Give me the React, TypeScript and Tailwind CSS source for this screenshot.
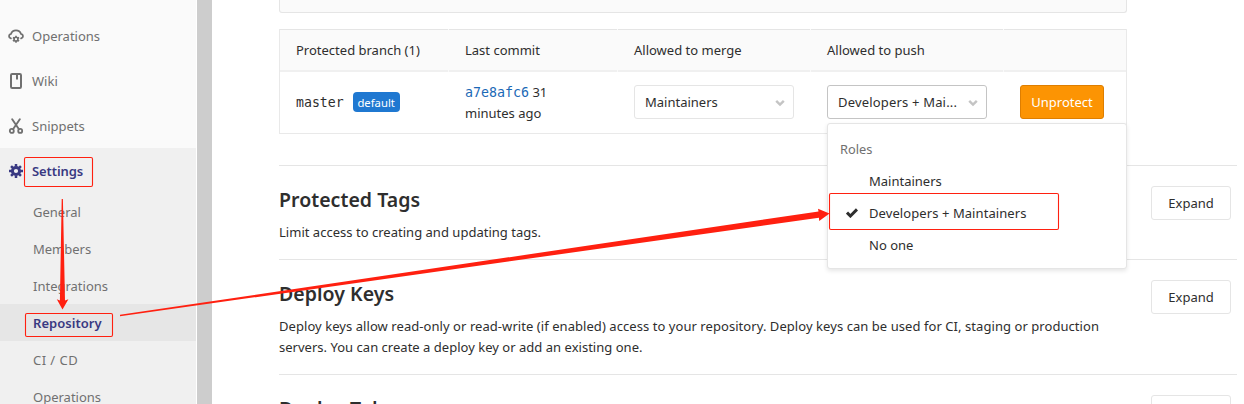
import React from "react";

type IconProps = { className?: string };

function CloudGearIcon({ className }: IconProps) {
  return (
    <svg viewBox="0 0 16 16" fill="none" className={className}>
      <path d="M2.9 10.4C.3 9.6.4 6.3 3.1 5.8A5.1 4.7 0 0 1 12.9 5.8C15.6 6.3 15.7 9.6 13.1 10.4" stroke="currentColor" strokeWidth="1.8" strokeLinecap="round" />
      <circle cx="8" cy="11.2" r="1.9" stroke="currentColor" strokeWidth="1.6" />
      <path d="M8 7.7v1.4M8 13.3v1.4M4.9 9.5l1.3.7M9.8 12.3l1.3.7M11.1 9.5l-1.3.7M6.2 12.3l-1.3.7" stroke="currentColor" strokeWidth="1.6" />
    </svg>
  );
}

function BookIcon({ className }: IconProps) {
  return (
    <svg viewBox="0 0 16 16" fill="none" className={className}>
      <rect x="3" y="1" width="10" height="14" rx="1.2" stroke="currentColor" strokeWidth="2" />
      <path d="M8 1h2v6L9 6 8 7z" fill="currentColor" />
    </svg>
  );
}

function ScissorsIcon({ className }: IconProps) {
  return (
    <svg viewBox="0 0 16 16" fill="none" stroke="currentColor" className={className}>
      <path d="M4.2 1.2 10.8 11M11.8 1.2 5.2 11" strokeWidth="1.9" strokeLinecap="round" />
      <circle cx="3.8" cy="12.9" r="2" strokeWidth="1.8" />
      <circle cx="12.2" cy="12.9" r="2" strokeWidth="1.8" />
    </svg>
  );
}

function GearIcon({ className }: IconProps) {
  return (
    <svg viewBox="0 0 16 16" fill="none" stroke="currentColor" className={className}>
      <circle cx="8" cy="8" r="3.6" strokeWidth="3" />
      <path d="M8 1v2.5M8 12.5V15M1 8h2.5M12.5 8H15M3.05 3.05l1.8 1.8M11.15 11.15l1.8 1.8M12.95 3.05l-1.8 1.8M4.85 11.15l-1.8 1.8" strokeWidth="2.5" />
    </svg>
  );
}

function Chevron() {
  return (
    <svg viewBox="0 0 10 8" fill="none" className="h-2 w-2.5 shrink-0 text-[#c4c4c4]">
      <path d="M1.2 1.8 5 5.6l3.8-3.8" stroke="currentColor" strokeWidth="2.4" />
    </svg>
  );
}

function CheckMark() {
  return (
    <svg viewBox="0 0 12 10" fill="none" className="-mt-0.5 h-2.5 w-3 text-[#2e2e2e]">
      <path d="M1 4.6 4.4 8 11 1.4" stroke="currentColor" strokeWidth="3" />
    </svg>
  );
}

const mainItems = [
  { label: "Operations", Icon: CloudGearIcon },
  { label: "Wiki", Icon: BookIcon },
  { label: "Snippets", Icon: ScissorsIcon },
];

const subItems = ["General", "Members", "Integrations", "Repository", "CI / CD", "Operations"];

function subItemClass(label: string) {
  if (label === "Repository") {
    return "flex h-[37px] items-center bg-[#e6e6e6] pt-[3px] pl-[33px] font-semibold tracking-[0.03px] text-[#393982]";
  }
  if (label === "CI / CD") {
    return "flex h-[37px] items-center pt-[3px] pl-[33px] tracking-[0.45px]";
  }
  return "flex h-[37px] items-center pt-[3px] pl-[33px]";
}

function Sidebar() {
  return (
    <nav className="h-[404px] w-[196px] shrink-0 overflow-hidden bg-[#fafafa] pt-[13px] text-[#707070]">
      {mainItems.map(({ label, Icon }) => (
        <div key={label} className="flex h-[45px] items-center gap-2 pt-px pl-2">
          <Icon className="h-4 w-4" />
          <span className="pt-0.5">{label}</span>
        </div>
      ))}
      <div className="bg-[#f0f0f0]">
        <div className="flex h-[45px] items-center gap-2 pt-px pl-2 font-semibold text-[#393982]">
          <GearIcon className="h-4 w-4" />
          <span className="pt-0.5 tracking-[-0.1px]">Settings</span>
        </div>
        {subItems.map((label) => (
          <div key={label} className={subItemClass(label)}>
            {label}
          </div>
        ))}
      </div>
    </nav>
  );
}

function RoleMenu() {
  return (
    <div className="absolute top-[37px] -left-px z-10 h-[146px] w-[300px] rounded-[3px] border border-[#e5e5e5] bg-white pt-[10px] shadow-[0_2px_4px_rgba(0,0,0,0.1)]">
      <div className="flex h-8 items-center pl-3 text-[12.8px] text-[#707070]">Roles</div>
      <div className="flex h-8 items-center pl-[41px]">Maintainers</div>
      <div className="flex h-8 items-center pl-[18px]">
        <CheckMark />
        <span className="pl-[11px] tracking-[0.08px]">Developers + Maintainers</span>
      </div>
      <div className="flex h-8 items-center pl-[41px]">No one</div>
    </div>
  );
}

const columns = "grid grid-cols-[169px_169px_193px_193px_122px]";

function HeaderCell({ children }: { children?: React.ReactNode }) {
  return (
    <div className="mr-px flex h-[43px] items-center border-t border-b-2 border-t-[#e5e5e5] border-b-[#f0f0f0] pt-0.5 pl-4 last:mr-0">
      {children}
    </div>
  );
}

function BranchTable() {
  return (
    <div className="mt-4 h-[105px] w-[848px] border-r border-b border-l border-[#e9e9e9]">
      <div className={`${columns} bg-[#fafafa]`}>
        <HeaderCell>Protected branch (1)</HeaderCell>
        <HeaderCell>Last commit</HeaderCell>
        <HeaderCell>Allowed to merge</HeaderCell>
        <HeaderCell>Allowed to push</HeaderCell>
        <HeaderCell />
      </div>
      <div className={`${columns} h-[61px] items-center`}>
        <div className="flex items-center gap-[9px] pl-4">
          <span className="pt-px font-['DejaVu_Sans_Mono',monospace] text-[13.2px]">master</span>
          <span className="flex h-5 w-[47px] items-center justify-center rounded-[4px] bg-[#1f78d1] pt-0.5 text-[11.3px] text-white">default</span>
        </div>
        <div className="pl-4 leading-[21px]">
          <span className="font-['DejaVu_Sans_Mono',monospace] text-[13.3px] text-[#1b69b6]">a7e8afc6</span> 31
          <br />
          minutes ago
        </div>
        <div className="-mt-px pl-4">
          <div className="flex h-[34px] w-40 items-center justify-between rounded-[3px] border border-[#e5e5e5] pt-0.5 pr-2 pl-2.5">
            Maintainers
            <Chevron />
          </div>
        </div>
        <div className="-mt-px pl-4">
          <div className="relative flex h-[34px] w-40 items-center justify-between rounded-[3px] border border-[#c4c4c4] pt-0.5 pr-2 pl-2.5">
            <span className="tracking-[0.18px]">Developers + Mai...</span>
            <Chevron />
            <RoleMenu />
          </div>
        </div>
        <div className="-mt-px pl-4">
          <div className="flex h-[34px] w-[84px] items-center justify-center rounded-[3px] border border-[#de7e00] bg-[#fc9403] pt-0.5 text-white">Unprotect</div>
        </div>
      </div>
    </div>
  );
}

function Section({ title, children }: { title: string; children?: React.ReactNode }) {
  return (
    <section className="flex w-[958px] items-start justify-between border-b border-[#e5e5e5] pt-5 pr-1.5 pb-4">
      <div>
        <h4 className="mb-2 text-[19.5px] leading-7 font-semibold tracking-[0.04px]">{title}</h4>
        <p className="leading-[21px] tracking-[0.02px] whitespace-nowrap">{children}</p>
      </div>
      <div className="flex h-[34px] w-20 shrink-0 items-center justify-center rounded-[3px] border border-[#e5e5e5] pt-0.5">Expand</div>
    </section>
  );
}

function Annotations() {
  return (
    <svg width="1244" height="404" className="pointer-events-none absolute top-0 left-0 z-20">
      <g fill="none" stroke="#ff2010" strokeWidth="1.1">
        <rect x="24.5" y="157.5" width="68" height="29" rx="1.5" />
        <rect x="25.5" y="313.5" width="87" height="23" rx="1.5" />
        <rect x="829.5" y="193.5" width="229" height="36" rx="1.5" />
      </g>
      <g fill="#ff2010">
        <path d="M61.7 199h1.2L65 300.5l3.4-1.2-5.9 10.2-5.7-10.2 3.1 1.2z" />
        <path d="M120 314.8L818.5 211.5l-.5-2.8L829.5 213.5l-10.3 7.5-.3-3.3L120 316.3z" />
      </g>
    </svg>
  );
}

export default function App() {
  return (
    <div className="relative flex h-[404px] w-[1244px] overflow-hidden bg-white font-['Noto_Sans','Open_Sans',sans-serif] text-[13px] text-[#2e2e2e]">
      <Sidebar />
      <div className="ml-px h-[404px] w-[15px] shrink-0 bg-[#cdcdcd]" />
      <main className="ml-[67px] h-[404px] w-[958px] shrink-0">
        <div className="h-[13px] w-[848px] rounded-b-[3px] border-r border-b border-l border-[#e5e5e5] bg-[#fafafa]" />
        <BranchTable />
        <div className="h-8 w-[958px] border-b border-[#e5e5e5]" />
        <Section title="Protected Tags">Limit access to creating and updating tags.</Section>
        <Section title="Deploy Keys">
          <span className="tracking-[0.06px]">
            Deploy keys allow read-only or read-write (if enabled) access to your repository. Deploy keys can be used for CI, staging or production
          </span>
          <br />
          servers. You can create a deploy key or add an existing one.
        </Section>
        <Section title="Deploy Tokens" />
      </main>
      <Annotations />
    </div>
  );
}
